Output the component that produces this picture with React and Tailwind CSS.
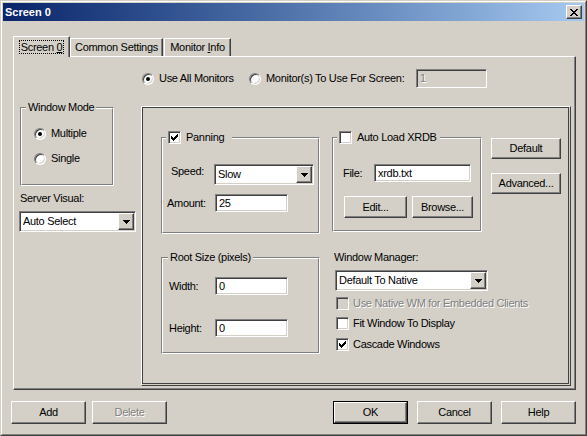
const face = "bg-[#d4d0c8]";
const raised = "border border-t-white border-l-white border-r-[#404040] border-b-[#404040] shadow-[inset_-1px_-1px_0_#808080]";
const sunken = "border border-t-[#808080] border-l-[#808080] border-r-white border-b-white shadow-[inset_1px_1px_0_#404040,inset_-1px_-1px_0_#d4d0c8]";
const dimText = "text-[#808080] [text-shadow:1px_1px_0_#fff]";

function Arrow() {
  return (
    <svg width="7" height="4" viewBox="0 0 7 4" shapeRendering="crispEdges">
      <rect x="0" y="0" width="7" height="1" fill="#000" />
      <rect x="1" y="1" width="5" height="1" fill="#000" />
      <rect x="2" y="2" width="3" height="1" fill="#000" />
      <rect x="3" y="3" width="1" height="1" fill="#000" />
    </svg>
  );
}

function CloseGlyph() {
  const rows = [
    [[0, 2], [6, 2]],
    [[1, 2], [5, 2]],
    [[2, 4]],
    [[3, 2]],
    [[2, 4]],
    [[1, 2], [5, 2]],
    [[0, 2], [6, 2]],
  ];
  return (
    <svg width="8" height="7" viewBox="0 0 8 7" shapeRendering="crispEdges">
      {rows.map((r, y) => r.map(([x, w], i) => <rect key={`${y}-${i}`} x={x} y={y} width={w} height="1" fill="#000" />))}
    </svg>
  );
}

function CheckGlyph({ color = "#000" }) {
  // 7x7 windows check, each column 3px tall
  const tops = [2, 3, 4, 3, 2, 1, 0];
  return (
    <svg width="7" height="7" viewBox="0 0 7 7" shapeRendering="crispEdges">
      {tops.map((t, x) => <rect key={x} x={x} y={t} width="1" height="3" fill={color} />)}
    </svg>
  );
}

function Radio({ checked }) {
  return (
    <div className="w-[12px] h-[12px] shrink-0 rounded-full bg-white border border-t-[#808080] border-l-[#808080] border-r-white border-b-white shadow-[inset_1px_1px_0_#404040,inset_-1px_-1px_0_#d4d0c8] flex items-center justify-center">
      {checked && <div className="w-[4px] h-[4px] rounded-full bg-black" />}
    </div>
  );
}

function Check({ checked, disabled }) {
  return (
    <div className={`w-[13px] h-[13px] shrink-0 ${sunken} ${disabled ? face : "bg-white"} flex items-center justify-center`}>
      {checked && <CheckGlyph />}
    </div>
  );
}

function CheckRow({ checked, disabled, label, className = "" }) {
  return (
    <div className={`h-[13px] flex items-center whitespace-nowrap ${className}`}>
      <Check checked={checked} disabled={disabled} />
      <span className={`ml-[4px] ${disabled ? dimText : ""}`}>{label}</span>
    </div>
  );
}

function Combo({ value, className = "" }) {
  return (
    <div className={`${sunken} bg-white p-[1px] flex items-center ${className}`}>
      <span className="flex-1 pl-[2px] truncate">{value}</span>
      <div className={`${raised} ${face} w-[16px] h-full flex items-center justify-center`}>
        <Arrow />
      </div>
    </div>
  );
}

function Input({ value, className = "", disabled }) {
  return (
    <div className={`${sunken} ${disabled ? face + " " + dimText : "bg-white"} px-[3px] flex items-center ${className}`}>
      {value}
    </div>
  );
}

function Btn({ children, className = "", disabled, primary }) {
  if (primary) {
    return (
      <div className={`border border-black ${className}`}>
        <div className={`${raised} ${face} h-full w-full flex items-center justify-center`}>{children}</div>
      </div>
    );
  }
  return (
    <div className={`${raised} ${face} flex items-center justify-center ${disabled ? dimText : ""} ${className}`}>
      {children}
    </div>
  );
}

function Group({ className = "", legend, legendClass = "", children }) {
  return (
    <div className={`relative border border-t-[#808080] border-l-[#808080] border-r-white border-b-white ${className}`}>
      <div className="h-full border border-t-white border-l-white border-r-[#808080] border-b-[#808080]">{children}</div>
      <div className={`absolute -top-[7px] ${face} flex items-center ${legendClass}`}>{legend}</div>
    </div>
  );
}

const tab = "border-t border-l border-r border-t-white border-l-white border-r-[#404040] shadow-[inset_-1px_0_0_#808080] bg-[#d4d0c8] flex items-center justify-center";

export default function App() {
  return (
    <div className="w-[587px] h-[436px] bg-[#d4d0c8] border border-t-[#d4d0c8] border-l-[#d4d0c8] border-r-[#404040] border-b-[#404040] font-['Liberation_Sans',Arial,sans-serif] text-[11px] leading-[13px] tracking-[-0.3px] text-black overflow-hidden">
      <div className="h-full border border-t-white border-l-white border-r-[#808080] border-b-[#808080] p-[1px] flex flex-col">
        {/* Title bar */}
        <div className="h-[18px] shrink-0 bg-linear-to-r from-[#0a246a] to-[#a6caf0] flex items-center justify-between pl-[2px] pr-[2px]">
          <span className="text-white font-bold tracking-normal">Screen 0</span>
          <div className={`${raised} ${face} w-[16px] h-[14px] flex items-center justify-center`}>
            <CloseGlyph />
          </div>
        </div>

        {/* Tabs */}
        <div className="mt-[15px] ml-[10px] h-[20px] flex items-end relative z-10">
          <div className={`${tab} w-[57px] h-[21px] -mb-[1px]`}>
            <span className="border border-dotted border-black px-[1px] leading-[12px]">
              Screen <span className="underline">0</span>
            </span>
          </div>
          <div className={`${tab} w-[93px] h-[18px]`}>Common Settings</div>
          <div className={`${tab} ml-[1px] w-[67px] h-[18px]`}>
            <span>
              Monitor <span className="underline">I</span>nfo
            </span>
          </div>
        </div>

        {/* Tab page */}
        <div className="ml-[10px] w-[563px] h-[334px] shrink-0 border border-t-white border-l-white border-r-[#404040] border-b-[#404040] shadow-[inset_-1px_-1px_0_#808080]">
          <div className="mt-[12px] ml-[128px] h-[19px] flex items-center">
            <div className="w-[107px] flex items-center">
              <Radio checked />
              <span className="ml-[5px]">Use All Monitors</span>
            </div>
            <div className="w-[167px] flex items-center">
              <Radio />
              <span className="ml-[5px]">Monitor(s) To Use For Screen:</span>
            </div>
            <Input disabled value="1" className="w-[71px] h-[19px]" />
          </div>

          <div className="mt-[18px] flex items-start">
            {/* left column */}
            <div className="ml-[5px] w-[117px] flex flex-col">
              <Group
                className="mt-[1px] ml-[1px] w-[94px] h-[79px]"
                legendClass="left-[5px] px-[2px]"
                legend={<span>Window Mode</span>}
              >
                <div className="pt-[18px] pl-[12px] flex flex-col">
                  <div className="flex items-center">
                    <Radio checked />
                    <span className="ml-[5px]">Multiple</span>
                  </div>
                  <div className="mt-[12px] flex items-center">
                    <Radio />
                    <span className="ml-[5px]">Single</span>
                  </div>
                </div>
              </Group>
              <span className="mt-[6px] ml-[1px]">Server Visual:</span>
              <Combo className="mt-[6px] w-[117px] h-[21px]" value="Auto Select" />
            </div>

            {/* settings frame */}
            <div className="ml-[5px] w-[430px] h-[280px] border border-t-white border-l-white border-r-[#404040] border-b-[#404040] pr-[1px] pb-[1px]">
              <div className="h-full border border-[#404040]">
                <div className="mt-[29px] flex items-start">
                  <Group
                    className="ml-[18px] w-[159px] h-[97px]"
                    legendClass="left-[4px] pl-[2px] w-[66px]"
                    legend={
                      <>
                        <Check checked />
                        <span className="ml-[5px]">Panning</span>
                      </>
                    }
                  >
                    <div className="flex flex-col">
                      <div className="mt-[25px] h-[21px] flex items-start">
                        <span className="ml-[8px] w-[43px] mt-[1px]">Speed:</span>
                        <Combo className="w-[100px] h-[21px]" value="Slow" />
                      </div>
                      <div className="mt-[9px] h-[18px] flex items-center">
                        <span className="ml-[4px] w-[48px]">Amount:</span>
                        <Input className="w-[73px] h-[18px]" value="25" />
                      </div>
                    </div>
                  </Group>

                  <Group
                    className="ml-[12px] w-[150px] h-[95px]"
                    legendClass="left-[4px] pl-[2px] w-[103px]"
                    legend={
                      <>
                        <Check />
                        <span className="ml-[5px]">Auto Load XRDB</span>
                      </>
                    }
                  >
                    <div className="flex flex-col">
                      <div className="mt-[25px] h-[18px] flex items-center">
                        <span className="ml-[9px] w-[31px]">File:</span>
                        <Input className="w-[97px] h-[18px]" value="xrdb.txt" />
                      </div>
                      <div className="mt-[14px] flex">
                        <Btn className="ml-[10px] w-[63px] h-[22px]">Edit...</Btn>
                        <Btn className="ml-[5px] w-[61px] h-[22px]">Browse...</Btn>
                      </div>
                    </div>
                  </Group>

                  <div className="ml-[9px] w-[70px] flex flex-col">
                    <Btn className="mt-[1px] h-[21px]">Default</Btn>
                    <Btn className="mt-[14px] h-[21px]">Advanced...</Btn>
                  </div>
                </div>

                <div className="mt-[17px] flex items-start">
                  <Group
                    className="ml-[18px] mt-[6px] w-[159px] h-[97px]"
                    legendClass="left-[6px] px-[2px]"
                    legend={<span>Root Size (pixels)</span>}
                  >
                    <div className="flex flex-col">
                      <div className="mt-[18px] h-[18px] flex items-center">
                        <span className="ml-[6px] w-[46px]">Width:</span>
                        <Input className="w-[73px] h-[18px]" value="0" />
                      </div>
                      <div className="mt-[24px] h-[18px] flex items-center">
                        <span className="ml-[6px] w-[46px]">Height:</span>
                        <Input className="w-[73px] h-[18px]" value="0" />
                      </div>
                    </div>
                  </Group>

                  <div className="ml-[14px] flex flex-col">
                    <span>Window Manager:</span>
                    <Combo className="mt-[6px] ml-[1px] w-[153px] h-[21px]" value="Default To Native" />
                    <CheckRow disabled className="mt-[6px] ml-[2px]" label="Use Native WM for Embedded Clients" />
                    <CheckRow className="mt-[7px] ml-[2px]" label="Fit Window To Display" />
                    <CheckRow checked className="mt-[8px] ml-[2px]" label="Cascade Windows" />
                  </div>
                </div>
              </div>
            </div>
          </div>
        </div>

        {/* Dialog buttons */}
        <div className="mt-[11px] h-[23px] flex">
          <Btn className="ml-[8px] w-[75px] h-[23px]">Add</Btn>
          <Btn disabled className="ml-[6px] w-[75px] h-[23px]">Delete</Btn>
          <Btn primary className="ml-[166px] w-[75px] h-[23px]">OK</Btn>
          <Btn className="ml-[9px] w-[75px] h-[23px]">Cancel</Btn>
          <Btn className="ml-[9px] w-[75px] h-[23px]">Help</Btn>
        </div>
      </div>
    </div>
  );
}
